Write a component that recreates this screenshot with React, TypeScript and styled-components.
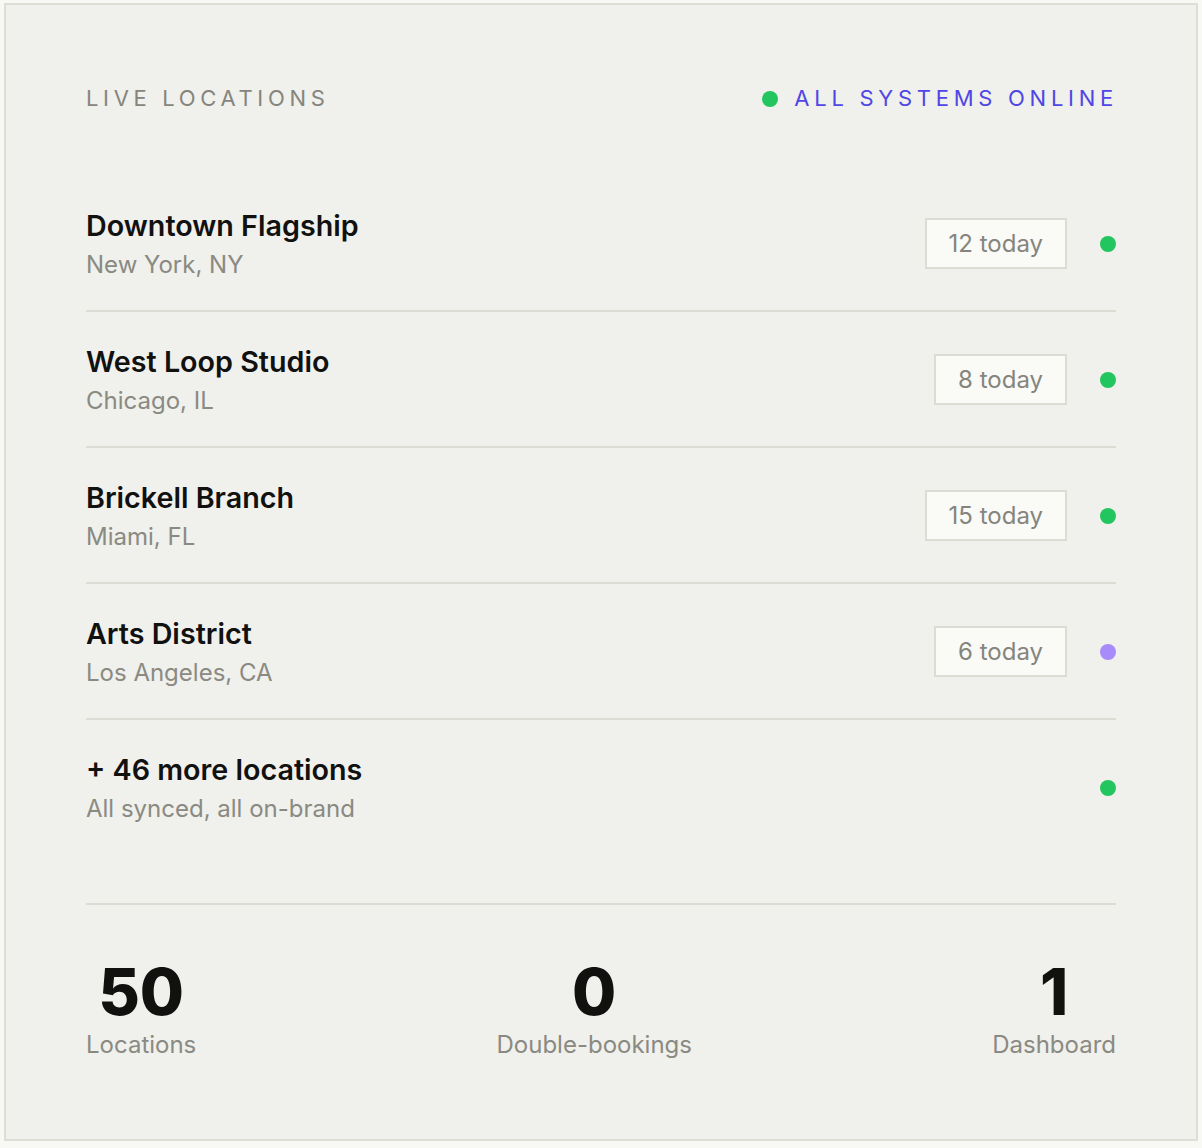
import * as React from 'react'
import styled, {createGlobalStyle} from 'styled-components'

type Location = {
  name: string
  city: string
  today?: number
  status: 'online' | 'pending'
}

const locations: Location[] = [
  {name: 'Downtown Flagship', city: 'New York, NY', today: 12, status: 'online'},
  {name: 'West Loop Studio', city: 'Chicago, IL', today: 8, status: 'online'},
  {name: 'Brickell Branch', city: 'Miami, FL', today: 15, status: 'online'},
  {name: 'Arts District', city: 'Los Angeles, CA', today: 6, status: 'pending'},
  {name: '+ 46 more locations', city: 'All synced, all on-brand', status: 'online'},
]

const stats = [
  {value: '50', label: 'Locations'},
  {value: '0', label: 'Double-bookings'},
  {value: '1', label: 'Dashboard'},
]

export default function App () {
  return (
    <>
      <GlobalStyle/>
      <Page>
        <Card>
          <Header>
            <Eyebrow>Live Locations</Eyebrow>
            <SystemStatus>
              <Dot $color='#22c55e'/>
              All Systems Online
            </SystemStatus>
          </Header>
          <List>
            {locations.map(loc => (
              <Row key={loc.name}>
                <Info>
                  <Name>{loc.name}</Name>
                  <City>{loc.city}</City>
                </Info>
                <Side>
                  {loc.today !== undefined && <Badge>{loc.today} today</Badge>}
                  <Dot $color={loc.status === 'online' ? '#22c55e' : '#a78bfa'}/>
                </Side>
              </Row>
            ))}
          </List>
          <Stats>
            {stats.map(s => (
              <Stat key={s.label}>
                <Value>{s.value}</Value>
                <Label>{s.label}</Label>
              </Stat>
            ))}
          </Stats>
        </Card>
      </Page>
    </>
  )
}

const GlobalStyle = createGlobalStyle`
  body {
    margin: 0;
    background: #f8f8f5;
    font-family: 'Inter', 'Noto Sans', sans-serif;
  }
`

const Page = styled.div`
  padding: 3px 4px 6px;
`

const Card = styled.div`
  background: #f0f0ec;
  border: 2px solid #deded7;
  padding: 80px 80px 79px;
`

const Header = styled.div`
  display: flex;
  align-items: center;
  justify-content: space-between;
  margin-bottom: 64px;
`

const Eyebrow = styled.div`
  font-size: 22px;
  line-height: 27px;
  letter-spacing: 0.212em;
  text-transform: uppercase;
  color: #85857d;
`

const SystemStatus = styled.div`
  display: flex;
  align-items: center;
  gap: 16px;
  font-size: 22px;
  line-height: 27px;
  letter-spacing: 0.215em;
  text-transform: uppercase;
  color: #4f46e5;
  margin-right: -2px;
`

const Dot = styled.span<{$color: string}>`
  width: 16px;
  height: 16px;
  border-radius: 50%;
  background: ${p => p.$color};
  flex-shrink: 0;
`

const List = styled.div`
  display: flex;
  flex-direction: column;
`

const Row = styled.div`
  display: flex;
  align-items: center;
  justify-content: space-between;
  padding: 31px 0 30px;
  border-bottom: 2px solid #dcdcd5;

  &:last-child {
    border-bottom: none;
  }
`

const Info = styled.div`
  display: flex;
  flex-direction: column;
  gap: 6px;
`

const Name = styled.div`
  font-size: 28.7px;
  line-height: 37px;
  font-weight: 600;
  color: #111110;
`

const City = styled.div`
  font-size: 24px;
  line-height: 30px;
  color: #8a8a82;
`

const Side = styled.div`
  display: flex;
  align-items: center;
  gap: 33px;
`

const Badge = styled.div`
  background: #fafaf7;
  border: 2px solid #dcdcd5;
  padding: 6px 22px;
  font-size: 24px;
  line-height: 35px;
  color: #85857d;
`

const Stats = styled.div`
  display: flex;
  justify-content: space-between;
  margin-top: 49px;
  padding-top: 55px;
  border-top: 2px solid #dcdcd5;
`

const Stat = styled.div`
  display: flex;
  flex-direction: column;
  align-items: center;
  gap: 6px;
`

const Value = styled.div`
  font-size: 64px;
  line-height: 1;
  font-weight: 800;
  color: #111110;
`

const Label = styled.div`
  font-size: 24px;
  line-height: 30px;
  color: #8a8a82;
`
